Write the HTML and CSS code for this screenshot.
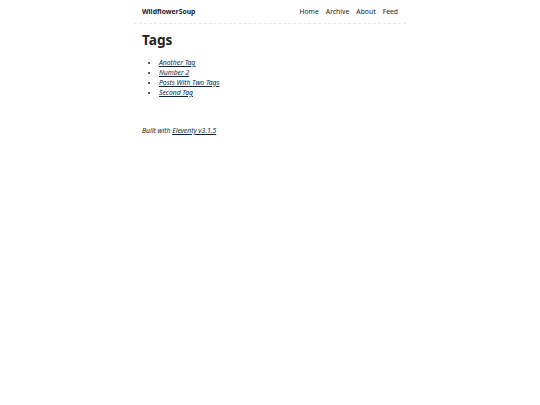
FILE: index.html
```html
<!DOCTYPE html>
<html lang="en">
<head>
<meta charset="utf-8">
<title>Tags</title>
<link rel="stylesheet" href="styles.css">
</head>
<body>
<div class="page">
  <header class="site-header">
    <a class="home-link" href="#">WildflowerSoup</a>
    <nav class="nav">
      <a href="#">Home</a>
      <a href="#">Archive</a>
      <a href="#">About</a>
      <a href="#">Feed</a>
    </nav>
  </header>
  <main class="main">
    <h1 class="title">Tags</h1>
    <ul class="tag-list">
      <li><a href="#">Another Tag</a></li>
      <li><a href="#">Number 2</a></li>
      <li><a href="#">Posts With Two Tags</a></li>
      <li><a href="#">Second Tag</a></li>
    </ul>
  </main>
  <footer class="footer">
    <em>Built with <a href="#">Eleventy v3.1.5</a></em>
  </footer>
</div>
</body>
</html>
```
FILE: styles.css
```css
html, body {
  margin: 0;
  padding: 0;
  background: #fff;
  color: #222;
  font-family: "Noto Sans", "Open Sans", sans-serif;
  font-size: 6.8px;
  line-height: 10px;
}
.page {
  width: 272px;
  margin: 0 auto;
}
.site-header {
  display: flex;
  align-items: center;
  justify-content: space-between;
  padding: 0 8px;
  height: 23px;
  border-bottom: 1px dashed #e8e8e8;
}
.home-link {
  font-weight: 700;
  color: #222;
  text-decoration: none;
}
.nav {
  display: flex;
  gap: 7px;
}
.nav a {
  color: #222;
  text-decoration: none;
}
.main {
  padding: 0 8px;
}
.title {
  font-size: 13.6px;
  line-height: 16px;
  margin: 8px 0 10px;
  font-weight: 700;
}
.tag-list {
  margin: 0;
  padding-left: 17px;
}
.tag-list a,
.footer a {
  color: #082840;
  font-style: italic;
}
.footer {
  padding: 0 8px;
  margin-top: 28px;
}
```
